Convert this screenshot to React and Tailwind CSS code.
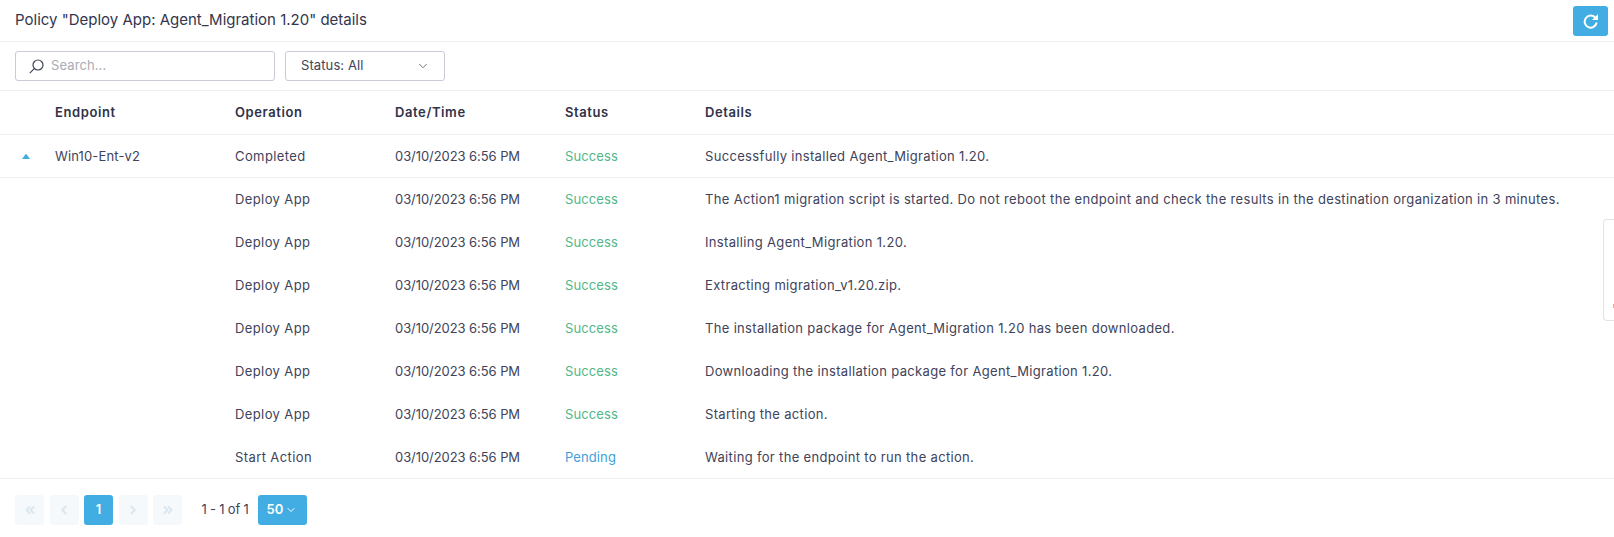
import React from 'react';
import { ChevronDown, ChevronLeft, ChevronRight, ChevronsLeft, ChevronsRight } from 'lucide-react';

const rows = [
  { operation: 'Deploy App', status: 'Success', details: 'The Action1 migration script is started. Do not reboot the endpoint and check the results in the destination organization in 3 minutes.' },
  { operation: 'Deploy App', status: 'Success', details: 'Installing Agent_Migration 1.20.' },
  { operation: 'Deploy App', status: 'Success', details: 'Extracting migration_v1.20.zip.' },
  { operation: 'Deploy App', status: 'Success', details: 'The installation package for Agent_Migration 1.20 has been downloaded.' },
  { operation: 'Deploy App', status: 'Success', details: 'Downloading the installation package for Agent_Migration 1.20.' },
  { operation: 'Deploy App', status: 'Success', details: 'Starting the action.' },
  { operation: 'Start Action', status: 'Pending', details: 'Waiting for the endpoint to run the action.', last: true },
];

const Row = ({ endpoint, operation, status, details, toggle, last }) => (
  <div className={`flex h-[43px] items-center border-b pt-[1px] ${toggle || last ? 'border-[#eeeff4]' : 'border-transparent'}`}>
    <div className="flex w-[55px] justify-center pr-[4px]">
      {toggle && (
        <svg width="8" height="5" viewBox="0 0 8 5">
          <path d="M3.5 0.2 Q4 -0.1 4.5 0.2 L8 5 L0 5 Z" fill="#41ade2" />
        </svg>
      )}
    </div>
    <div className="w-[180px] tracking-[0.15px]">{endpoint}</div>
    <div className="w-[160px] tracking-[0.4px]">{operation}</div>
    <div className="w-[170px] tracking-[-0.07px]">03/10/2023 6:56 PM</div>
    <div className={`w-[140px] ${status === 'Success' ? 'text-[#52b788]' : 'text-[#3f9fdc]'}`}>{status}</div>
    <div className="whitespace-nowrap tracking-[0.33px]">{details}</div>
  </div>
);

const PageButton = ({ children }) => (
  <button className="flex h-[30px] w-[29px] items-center justify-center rounded-[3px] bg-[#f6f9fc] text-[#dbe7ee]">
    {children}
  </button>
);

export default function App() {
  return (
    <div className="relative h-[537px] overflow-hidden bg-white font-['Inter',sans-serif] text-[13px] tracking-[0.1px] text-[#40435a]">
      <div className="flex h-[42px] items-center justify-between border-b border-[#eeeff1] pl-[15px] pr-[6px]">
        <h1 className="text-[15px] font-normal tracking-normal text-[#33364d]">Policy "Deploy App: Agent_Migration 1.20" details</h1>
        <button className="flex h-[30px] w-[35px] items-center justify-center rounded-[3px] bg-[#41ade2]">
          <svg width="16" height="16" viewBox="0 0 16 16" fill="none">
            <path d="M12.6 5.2 A6 6 0 1 0 13.6 9.5" stroke="white" strokeWidth="2" />
            <path d="M15 1 L15 7 L9 7 Z" fill="white" />
          </svg>
        </button>
      </div>

      <div className="flex h-[49px] items-center gap-[10px] border-b border-[#eeeff4] px-[15px]">
        <div className="flex h-[30px] w-[260px] items-center gap-[7px] rounded-[3px] border border-[#c9cbd8] pl-[13px] text-[#a9abb5]">
          <svg width="15" height="15" viewBox="0 0 15 15" fill="none" stroke="#40435a" strokeWidth="1.2">
            <circle cx="9" cy="6" r="5" />
            <path d="M5.2 9.6 L0.8 14.2" />
          </svg>
          <span>Search...</span>
        </div>
        <div className="flex h-[30px] w-[160px] items-center justify-between rounded-[3px] border border-[#c9cbd8] pl-[15px] pr-[14px]">
          <span>Status: All</span>
          <ChevronDown size={14} strokeWidth={1.25} />
        </div>
      </div>

      <div className="flex h-[44px] items-center border-b border-[#eeeff4] font-semibold tracking-[0.6px] text-[#2f3249]">
        <div className="w-[55px]" />
        <div className="w-[180px]">Endpoint</div>
        <div className="w-[160px]">Operation</div>
        <div className="w-[170px]">Date/Time</div>
        <div className="w-[140px]">Status</div>
        <div>Details</div>
      </div>

      <Row toggle endpoint="Win10-Ent-v2" operation="Completed" status="Success" details="Successfully installed Agent_Migration 1.20." />
      {rows.map((row, i) => (
        <Row key={i} {...row} />
      ))}

      <div className="flex items-center pl-[15px] pt-[16px]">
        <div className="flex items-center gap-[5.5px]">
          <PageButton><ChevronsLeft size={14} strokeWidth={3.5} /></PageButton>
          <PageButton><ChevronLeft size={14} strokeWidth={3.5} /></PageButton>
          <button className="flex h-[30px] w-[29px] items-center justify-center rounded-[3px] bg-[#41ade2] font-semibold text-white">1</button>
          <PageButton><ChevronRight size={14} strokeWidth={3.5} /></PageButton>
          <PageButton><ChevronsRight size={14} strokeWidth={3.5} /></PageButton>
        </div>
        <span className="ml-[19.5px] w-[56px] whitespace-nowrap tracking-[-0.2px]">1 - 1 of 1</span>
        <button className="flex h-[30px] w-[49px] items-center justify-center gap-[2px] rounded-[3px] bg-[#41ade2] font-semibold text-white">
          50 <ChevronDown size={12} strokeWidth={2} />
        </button>
      </div>

      <div className="absolute right-0 top-[219px] h-[102px] w-[11px] rounded-l-[4px] border border-r-0 border-[#e3e3e6] bg-white">
        <div className="absolute bottom-[12px] right-0 h-[4px] w-[1px] bg-[#eda8a8]" />
      </div>
    </div>
  );
}
